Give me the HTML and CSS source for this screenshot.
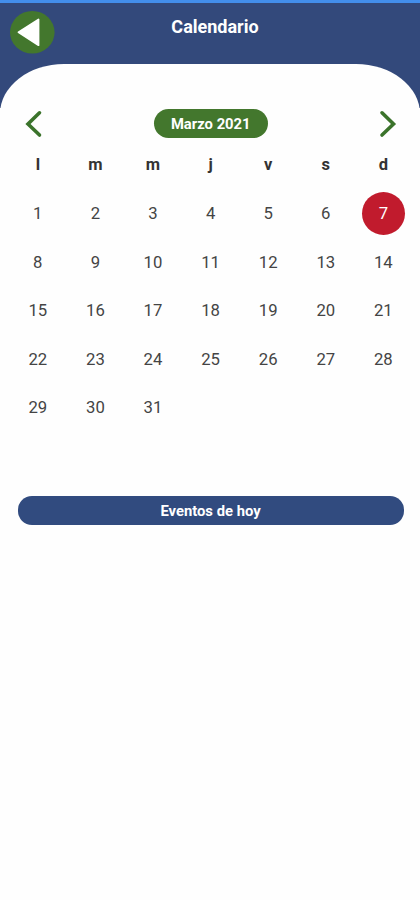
FILE: index.html
```html
<!DOCTYPE html>
<html lang="es">
<head>
<meta charset="utf-8">
<title>Calendario</title>
<link rel="stylesheet" href="styles.css">
</head>
<body>
<header class="header">
  <button class="back" aria-label="Volver">
    <svg width="45" height="43" viewBox="0 0 45 43"><ellipse cx="22.3" cy="21.3" rx="22.3" ry="21.3" fill="#43772d"/><path d="M8.5 21.2 28.5 8.5V34.2Z" fill="#fff" stroke="#fff" stroke-width="1.8" stroke-linejoin="round"/></svg>
  </button>
  <h1 class="title">Calendario</h1>
</header>
<main class="sheet">
  <nav class="month-bar">
    <svg class="chevron" width="18" height="28" viewBox="0 0 18 28"><path d="M14.5 2.8 3 14 14.5 25"/></svg>
    <span class="month">Marzo 2021</span>
    <svg class="chevron" width="18" height="28" viewBox="0 0 18 28"><path d="M3 2.8 14.5 14 3 25"/></svg>
  </nav>
  <div class="weekdays"><span>l</span><span>m</span><span>m</span><span>j</span><span>v</span><span>s</span><span>d</span></div>
  <div class="days">
    <span>1</span><span>2</span><span>3</span><span>4</span><span>5</span><span>6</span><span class="today">7</span>
    <span>8</span><span>9</span><span>10</span><span>11</span><span>12</span><span>13</span><span>14</span>
    <span>15</span><span>16</span><span>17</span><span>18</span><span>19</span><span>20</span><span>21</span>
    <span>22</span><span>23</span><span>24</span><span>25</span><span>26</span><span>27</span><span>28</span>
    <span>29</span><span>30</span><span>31</span>
  </div>
  <div class="events">Eventos de hoy</div>
</main>
</body>
</html>
```
FILE: styles.css
```css
* { box-sizing: border-box; }
body {
  margin: 0;
  height: 900px;
  overflow: hidden;
  display: flex;
  flex-direction: column;
  font-family: Roboto, sans-serif;
  color: #444;
  background: linear-gradient(#33497b 108px, #fff 108px);
}
.header {
  height: 63.5px;
  flex: none;
  display: grid;
  grid-template-columns: 60px 1fr 60px;
  align-items: start;
  border-top: 3px solid #438eeb;
  padding: 0 0 0 10px;
}
.back { margin: 8px 0 0; padding: 0; border: 0; background: none; height: 43px; width: 45px; }
.back svg { display: block; }
.title {
  margin: 12px 0 0;
  font-size: 18px;
  line-height: 24px;
  font-weight: 700;
  text-align: center;
  color: #fff;
}
.sheet {
  flex: 1;
  background: #fefefe;
  border-radius: 64px 64px 0 0 / 50px 50px 0 0;
  padding-top: 45.5px;
}
.month-bar {
  display: flex;
  align-items: center;
  justify-content: space-between;
  height: 29px;
  padding: 0 23.5px 0 25px;
}
.chevron { fill: none; stroke: #3b732b; stroke-width: 3.6; stroke-linecap: round; }
.month {
  width: 114px;
  height: 29px;
  border-radius: 15px;
  background: #43772d;
  color: #fff;
  font-size: 14.8px;
  font-weight: 700;
  line-height: 30px;
  text-align: center;
}
.weekdays, .days {
  display: grid;
  grid-template-columns: repeat(7, 57.6px);
  justify-content: center;
  justify-items: center;
  padding-left: 1.2px;
}
.weekdays { margin-top: 15.2px; font-size: 16.5px; font-weight: 700; line-height: 24px; color: #333; }
.days { grid-auto-rows: 48.6px; align-items: center; margin-top: 12px; font-size: 16.7px; }
.today {
  width: 43.5px;
  height: 43.5px;
  border-radius: 50%;
  background: #c11b2d;
  color: #fff;
  line-height: 44px;
  text-align: center;
}
.events {
  margin: 63.8px 16.5px 0 17.5px;
  height: 29px;
  border-radius: 14px;
  background: #314b7f;
  color: #fff;
  font-size: 14.8px;
  font-weight: 700;
  line-height: 31px;
  text-align: center;
}
```
